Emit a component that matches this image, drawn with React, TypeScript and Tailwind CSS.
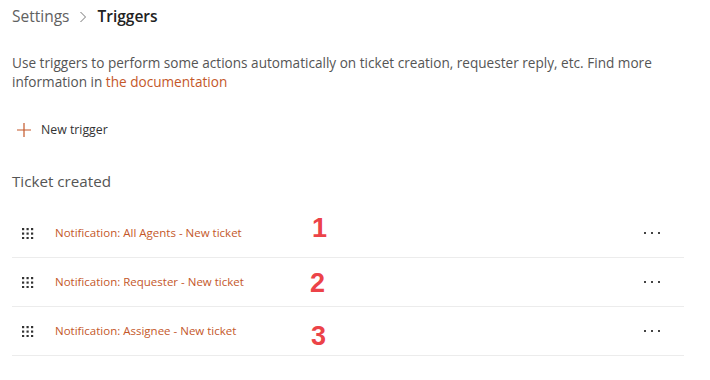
import React from "react";

const font = { fontFamily: '"Open Sans", "Noto Sans", sans-serif' };

function Grip() {
  return (
    <svg width="12" height="11" viewBox="0 0 12 11" className="shrink-0">
      {[0, 1, 2].map((r) =>
        [0, 1, 2].map((c) => (
          <rect key={`${r}-${c}`} x={c * 4.5} y={r * 4.5} width="2.2" height="2.2" fill="#333" />
        ))
      )}
    </svg>
  );
}

function Dots() {
  return (
    <svg width="18" height="3" viewBox="0 0 18 3">
      <rect x="0" y="0" width="2" height="2" fill="#444" />
      <rect x="7" y="0" width="2" height="2" fill="#444" />
      <rect x="14" y="0" width="2" height="2" fill="#444" />
    </svg>
  );
}

const rows = [
  { name: "Notification: All Agents - New ticket", n: "1", pos: "top-[-1px] left-[300px]" },
  { name: "Notification: Requester - New ticket", n: "2", pos: "top-[5px] left-[298px]" },
  { name: "Notification: Assignee - New ticket", n: "3", pos: "top-[9px] left-[299px]" },
];

export default function App() {
  return (
    <div className="w-[710px] h-[380px] bg-white overflow-hidden pl-3 pt-[6px]" style={font}>
      <div className="flex items-center h-[22px] text-[15.5px]">
        <span className="text-[#616161]">Settings</span>
        <svg width="8" height="12" viewBox="0 0 8 12" className="mx-[10px]">
          <path d="M1.5 1 L6.5 6 L1.5 11" stroke="#777" strokeWidth="1" fill="none" />
        </svg>
        <span className="text-[#222] font-semibold">Triggers</span>
      </div>
      <p className="mt-[25px] w-[672px] text-[13.6px] leading-[19px] text-[#555]">
        Use triggers to perform some actions automatically on ticket creation, requester reply, etc. Find more information in{" "}
        <span className="text-[#c4582a]">the documentation</span>
      </p>
      <div className="mt-[29px] flex items-center h-[20px] text-[12.3px] text-[#333]">
        <svg width="14" height="14" viewBox="0 0 14 14" className="ml-[5px] mr-[10px]">
          <path d="M7 0 V14 M0 7 H14" stroke="#c4582a" strokeWidth="1.2" />
        </svg>
        New trigger
      </div>
      <div className="mt-[30px] text-[15.2px] text-[#555] h-[22px] leading-[22px]">Ticket created</div>
      <div className="mt-[17px] w-[672px]">
        {rows.map((r) => (
          <div key={r.n} className="relative flex items-center h-[49px] border-b border-[#ececec]">
            <div className="ml-[10px] mr-[21px]">
              <Grip />
            </div>
            <span className="text-[11.5px] text-[#c4582a]">{r.name}</span>
            <span className={`absolute ${r.pos} text-[27px] font-bold text-[#ec4348]`} style={{ fontFamily: '"Liberation Sans", Arial, sans-serif' }}>
              {r.n}
            </span>
            <div className="ml-auto mr-[22px]">
              <Dots />
            </div>
          </div>
        ))}
      </div>
    </div>
  );
}
